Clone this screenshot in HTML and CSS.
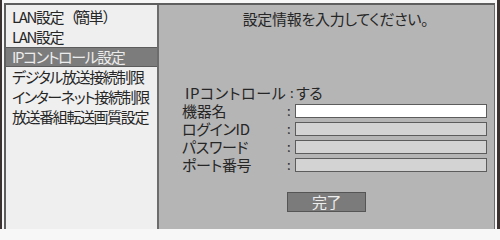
FILE: index.html
```html
<!DOCTYPE html>
<html lang="ja">
<head>
<meta charset="utf-8">
<link rel="stylesheet" href="styles.css">
</head>
<body>
<div class="outer">
  <div class="frame">
    <ul class="menu">
      <li class="item">LAN設定<span class="paren">（</span>簡単<span class="paren">）</span></li>
      <li class="item">LAN設定</li>
      <li class="item active">IPコントロール設定</li>
      <li class="item">デジタル放送接続制限</li>
      <li class="item">インターネット接続制限</li>
      <li class="item">放送番組転送画質設定</li>
    </ul>
    <div class="divider"></div>
    <div class="panel">
      <div class="title">設定情報を入力してください。</div>
      <div class="form">
        <div class="label ip">IPコントロール</div>
        <div class="colon ipcolon">:</div>
        <div class="value">する</div>

        <div class="label">機器名</div>
        <div class="colon">:</div>
        <div class="field active-field"></div>

        <div class="label">ログインID</div>
        <div class="colon">:</div>
        <div class="field"></div>

        <div class="label">パスワード</div>
        <div class="colon">:</div>
        <div class="field"></div>

        <div class="label">ポート番号</div>
        <div class="colon">:</div>
        <div class="field"></div>
      </div>
      <div class="button">完了</div>
    </div>
  </div>
</div>
</body>
</html>
```
FILE: styles.css
```css
* { box-sizing: border-box; }
html, body { margin: 0; padding: 0; }
body {
  background: #f7f7f7;
  font-family: "Noto Sans CJK JP", "Noto Sans", sans-serif;
  font-feature-settings: "palt";
  color: #262626;
}
.outer {
  width: 500px;
  height: 229px;
  border-left: 2px solid #3b3232;
  border-right: 3px solid #3b3232;
  padding: 3px 2px 0 2px;
  background: #f7f7f7;
}
.frame {
  display: flex;
  height: 100%;
  border-top: 2px solid #5e5e5e;
  border-left: 2px solid #5e5e5e;
  border-right: 1px solid #6a6a6a;
}
.menu {
  list-style: none;
  margin: 0;
  padding: 2px 0 0 0;
  width: 151px;
  background: #efefef;
}
.item {
  height: 20px;
  line-height: 20px;
  padding-left: 6px;
  font-size: 15px;
  letter-spacing: -1.4px;
  white-space: nowrap;
}
.paren { font-feature-settings: normal; letter-spacing: -3px; }
.item.active {
  background: #7c7c7c;
  color: #ececec;
  border-top: 1px solid #5c5c5c;
  border-bottom: 1px solid #5c5c5c;
  line-height: 18px;
}
.divider {
  width: 2px;
  background: #6c6c6c;
}
.panel {
  flex: 1;
  background: #b5b5b5;
  padding: 5px 7px 0 23px;
  display: flex;
  flex-direction: column;
}
.title {
  height: 18px;
  line-height: 18px;
  font-size: 15px;
  letter-spacing: -0.3px;
  text-align: center;
  padding-left: 2px;
}
.form {
  margin-top: 56px;
  display: grid;
  grid-template-columns: 105px 8px 192px;
  grid-auto-rows: 18px;
  align-items: center;
  font-size: 15px;
  letter-spacing: -0.3px;
  line-height: 18px;
}
.label { white-space: nowrap; }
.label.ip { padding-left: 3px; letter-spacing: 0.6px; }
.colon { font-size: 13px; }
.ipcolon { margin-left: 3px; }
.value { white-space: nowrap; padding-left: 1px; }
.field {
  height: 14px;
  background: #d3d3d3;
  border: 1px solid #5c5c5c;
}
.field.active-field { background: #ffffff; }
.button {
  margin-top: 18px;
  margin-left: 105px;
  width: 79px;
  height: 20px;
  background: #7b7b7b;
  border: 1px solid #555555;
  color: #ededed;
  font-size: 15px;
  line-height: 18px;
  text-align: center;
  letter-spacing: -0.5px;
}
```
